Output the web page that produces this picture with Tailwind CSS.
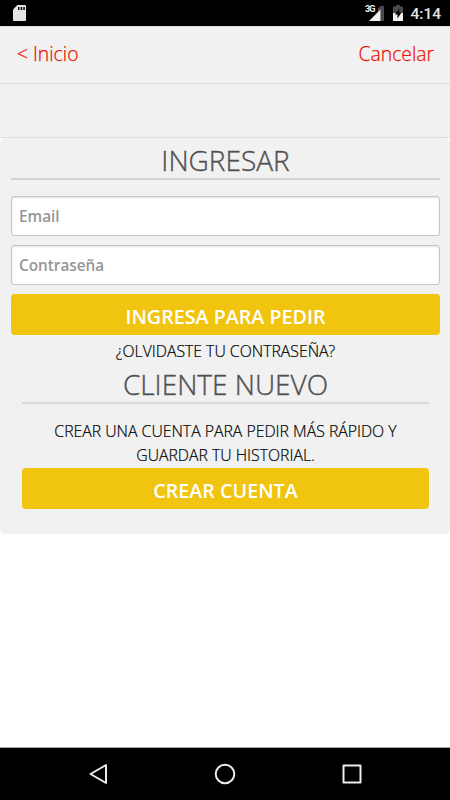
<!DOCTYPE html>
<html lang="es">
<head>
    <meta charset="UTF-8">
    <meta name="viewport" content="width=device-width, initial-scale=1.0">
    <title>Ingresar</title>
    <script src="https://cdn.jsdelivr.net/npm/@tailwindcss/browser@4"></script>
</head>
<body class="bg-white font-['Open_Sans',sans-serif] text-black">
    <div class="h-screen flex flex-col overflow-hidden">
        <!-- Barra de estado -->
        <div class="h-[26px] shrink-0 bg-black flex items-center justify-between pl-[13px] pr-[9px]">
            <svg class="w-[13px] h-4" viewBox="0 0 13 16">
                <path d="M4.5 0H12a1 1 0 0 1 1 1v14a1 1 0 0 1-1 1H1a1 1 0 0 1-1-1V4.500z" fill="#e6e6e6"/>
                <path d="M5 2h1.500v3H5zM7.700 2h1.500v3H7.700zM10.300 2h1.500v3h-1.500z" fill="#000"/>
            </svg>
            <div class="flex items-center">
                <svg class="w-[21px] h-[17px]" viewBox="0 0 21 17">
                    <path d="M17.500 1H21v15h-3.500zM17.500 1v4L15 7.500V3.500z" fill="#4a4a4a"/>
                    <path d="M17.500 4.500v11.500H6z" fill="#f2f2f2"/>
                    <text x="2" y="7" font-family="Roboto, sans-serif" font-size="9" font-weight="700" textLength="10.500" fill="#f2f2f2">3G</text>
                </svg>
                <svg class="w-[10px] h-4 ml-[9px]" viewBox="0 0 10 16">
                    <path d="M3 0h4v1.500h3V8H0V1.500h3z" fill="#4a4a4a"/>
                    <path d="M0 8h10v8H0z" fill="#f2f2f2"/>
                    <path d="M6.500 3.500L1.800 9.500h2.700v4L8.500 7.500H6z" fill="#000"/>
                </svg>
                <span class="ml-[7px] pt-[3px] font-['Roboto',sans-serif] font-medium text-[15.500px] leading-none text-[#e6e6e6]">4:14</span>
            </div>
        </div>

        <!-- Encabezado -->
        <header class="h-[58px] shrink-0 bg-[#f1f1f1] border-t border-b border-t-[#dcdcdc] border-b-[#dedede] flex items-center justify-between pl-[17px] pr-4 pb-[2px] text-[19.3px] font-light text-[#ee1100] [-webkit-text-stroke:0.25px]">
            <a href="#">&lt; Inicio</a>
            <a href="#">Cancelar</a>
        </header>
        <div class="h-[54px] shrink-0 bg-[#f1f1f1] border-b border-[#dedede]"></div>

        <!-- Formulario -->
        <main class="flex-grow">
            <section class="h-[396px] bg-[#f1f1f1] rounded-[5px] pl-[11px] pr-[10px] pt-[2px]">
                <h1 class="h-10 border-b-2 border-[#d2d2d2] text-center text-[28px] leading-10 font-light text-[#505050] [-webkit-text-stroke:0.35px]">INGRESAR</h1>
                <form class="mt-4 flex flex-col gap-[9px]">
                    <input type="text" placeholder="Email" class="h-10 w-full bg-white border border-[#c6c6c6] rounded-[3px] px-[7px] shadow-[inset_0_1px_2px_rgba(0,0,0,0.12)] text-[15.3px] font-semibold placeholder:text-[#969696]">
                    <input type="password" placeholder="Contraseña" class="h-10 w-full bg-white border border-[#c6c6c6] rounded-[3px] px-[7px] shadow-[inset_0_1px_2px_rgba(0,0,0,0.12)] text-[15.3px] font-semibold placeholder:text-[#969696]">
                    <button type="button" class="h-[41px] pt-1 bg-[#f1c40f] rounded-[4px] text-[19.7px] font-semibold text-white">INGRESA PARA PEDIR</button>
                </form>
                <p class="pt-1 h-[28px] text-center text-[15.8px] leading-6 font-light [-webkit-text-stroke:0.2px]"><a href="#">¿OLVIDASTE TU CONTRASEÑA?</a></p>
                <div class="px-[11px]">
                    <h2 class="h-[41px] pt-[1px] border-b-2 border-[#d9d9d9] text-center text-[28px] leading-10 font-light text-[#505050] [-webkit-text-stroke:0.35px]">CLIENTE NUEVO</h2>
                    <p class="pt-[15px] text-center text-[15.8px] leading-6 font-light [-webkit-text-stroke:0.2px]">CREAR UNA CUENTA PARA PEDIR MÁS RÁPIDO Y<br>GUARDAR TU HISTORIAL.</p>
                    <button type="button" class="mt-[1px] h-[41px] w-full pt-1 bg-[#f1c40f] rounded-[4px] text-[19.7px] font-semibold text-white">CREAR CUENTA</button>
                </div>
            </section>
        </main>

        <!-- Barra de navegación -->
        <nav class="h-[53px] shrink-0 bg-black border-t border-[#a8a8a8] flex items-center justify-between px-[88px]">
            <svg class="w-5 h-[22px]" viewBox="0 0 20 22" fill="none" stroke="#ececec" stroke-width="2" stroke-linejoin="round"><path d="M18 2v18L2.500 11z"/></svg>
            <svg class="w-[22px] h-[22px]" viewBox="0 0 22 22" fill="none" stroke="#ececec" stroke-width="2"><circle cx="11" cy="11" r="9.300"/></svg>
            <svg class="w-5 h-5" viewBox="0 0 20 20" fill="none" stroke="#ececec" stroke-width="2" stroke-linejoin="round"><rect x="1.500" y="1.500" width="17" height="17"/></svg>
        </nav>
    </div>
</body>
</html>
